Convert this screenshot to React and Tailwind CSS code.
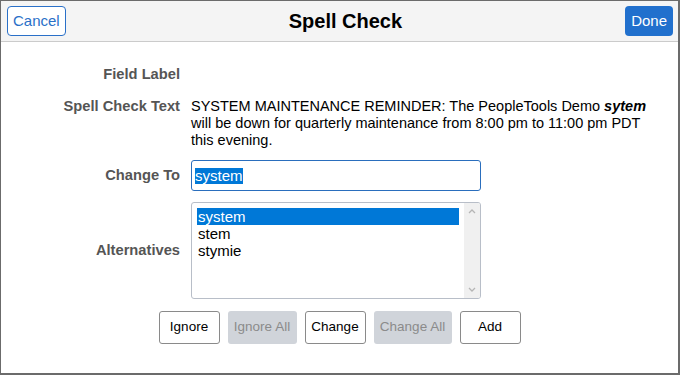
const alternatives = ['system', 'stem', 'stymie']

const actions = [
  { label: 'Ignore', w: 'w-[61px]' },
  { label: 'Ignore All', w: 'w-[69px]', disabled: true },
  { label: 'Change', w: 'w-[61px]' },
  { label: 'Change All', w: 'w-[78px]', disabled: true },
  { label: 'Add', w: 'w-[61px]' },
]

function Label({ children }) {
  return (
    <div className="w-[190px] shrink-0 pr-[11px] text-right font-bold text-[14.7px] text-[#555]">
      {children}
    </div>
  )
}

export default function App() {
  return (
    <div className="w-[680px] h-[375px] bg-white border-l border-t border-r-2 border-b-2 border-[#6b6b6b] font-['Liberation_Sans',Arial,sans-serif] text-[14.5px] text-black flex flex-col">
      {/* header */}
      <div className="h-[41px] shrink-0 bg-[#f4f4f4] border-b border-[#cbcbcb] flex items-center justify-between pl-[6px] pr-[5px]">
        <button className="h-[30px] px-[5px] rounded-[4px] border border-[#2a70c8] bg-white text-[#2a70c8] text-[15px]">
          Cancel
        </button>
        <div className="text-[20px] font-bold">Spell Check</div>
        <button className="h-[30px] px-[6px] rounded-[4px] bg-[#2170cd] text-white text-[15px]">
          Done
        </button>
      </div>

      <div className="flex flex-col pt-[24px]">
        <div className="flex leading-[16px]">
          <Label>Field Label</Label>
        </div>

        <div className="flex mt-[16px] leading-[17px]">
          <Label>Spell Check Text</Label>
          <div className="w-[460px]">
            SYSTEM MAINTENANCE REMINDER: The PeopleTools Demo <b><i>sytem</i></b> will be down for
            quarterly maintenance from 8:00 pm to 11:00 pm PDT this evening.
          </div>
        </div>

        <div className="flex items-center mt-[11px]">
          <Label>Change To</Label>
          <div className="w-[290px] h-[31px] border border-[#2a6ebd] rounded-[3px] flex items-center px-[3px]">
            <span className="bg-[#0078d7] text-white text-[15px] leading-[16px]">system</span>
          </div>
        </div>

        <div className="flex items-center mt-[11px]">
          <Label>Alternatives</Label>
          <div className="w-[290px] h-[97px] border border-[#b8bec8] rounded-[3px] flex overflow-hidden">
            <div className="flex-1 pt-[5px] pl-[5px] pr-[5px] text-[15px] leading-[17px]">
              {alternatives.map((a, i) => (
                <div key={a} className={`pl-[1px] ${i === 0 ? 'bg-[#0078d7] text-white' : ''}`}>
                  {a}
                </div>
              ))}
            </div>
            <div className="w-[16px] bg-[#f0f0f0] flex flex-col items-center justify-between py-[3px] text-[#b5b5b5]">
              <svg width="8" height="6" viewBox="0 0 8 6" className="mt-[2px]">
                <path d="M1 5 L4 2 L7 5" fill="none" stroke="currentColor" strokeWidth="1.3" />
              </svg>
              <svg width="8" height="6" viewBox="0 0 8 6" className="mb-[2px]">
                <path d="M1 1 L4 4 L7 1" fill="none" stroke="currentColor" strokeWidth="1.3" />
              </svg>
            </div>
          </div>
        </div>

        <div className="flex justify-center gap-[8px] mt-[12px]">
          {actions.map((a) => (
            <button
              key={a.label}
              className={`${a.w} h-[33px] rounded-[3px] text-[13.5px] ${
                a.disabled
                  ? 'bg-[#d0d4da] text-[#8b8b8b]'
                  : 'bg-white border border-[#8a8a8a] text-black'
              }`}
            >
              {a.label}
            </button>
          ))}
        </div>
      </div>
    </div>
  )
}
